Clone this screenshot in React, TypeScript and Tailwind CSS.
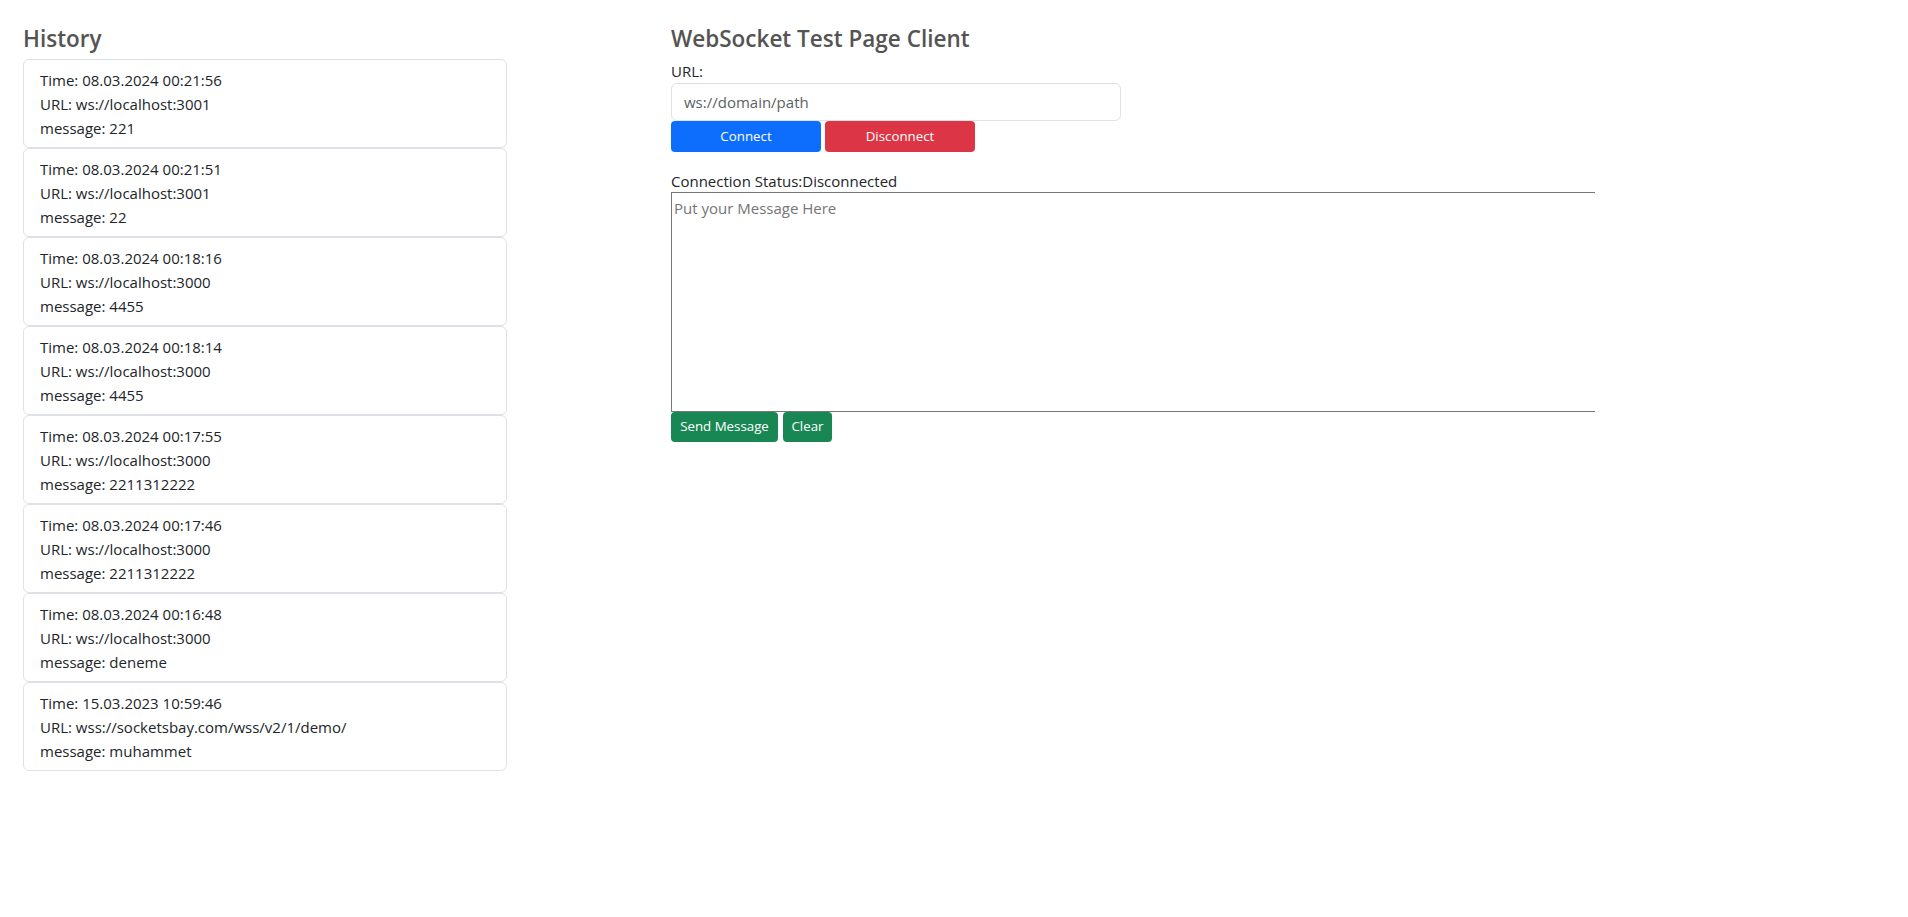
import React from 'react';

const history = [
    {time: '08.03.2024 00:21:56', url: 'ws://localhost:3001', message: '221'},
    {time: '08.03.2024 00:21:51', url: 'ws://localhost:3001', message: '22'},
    {time: '08.03.2024 00:18:16', url: 'ws://localhost:3000', message: '4455'},
    {time: '08.03.2024 00:18:14', url: 'ws://localhost:3000', message: '4455'},
    {time: '08.03.2024 00:17:55', url: 'ws://localhost:3000', message: '2211312222'},
    {time: '08.03.2024 00:17:46', url: 'ws://localhost:3000', message: '2211312222'},
    {time: '08.03.2024 00:16:48', url: 'ws://localhost:3000', message: 'deneme'},
    {time: '15.03.2023 10:59:46', url: 'wss://socketsbay.com/wss/v2/1/demo/', message: 'muhammet'},
];

const App = () => {
    return (
        <div className="min-h-screen bg-white text-[#212529] flex items-start pt-[24px] text-[15px] font-['Open_Sans',sans-serif]">
            {/* history column */}
            <section className="w-[484px] ml-[23px] flex-none">
                <h4 className="text-[22.5px] leading-[29px] font-semibold text-[#545454] mb-[6px]">History</h4>
                <div className="flex flex-col">
                    {history.map((item, i) => (
                        <div key={i} className="border border-[#dee2e6] rounded-[6px] pl-4 pr-4 pt-2 pb-[7px] leading-[24px]">
                            <div>Time: {item.time}</div>
                            <div>URL: {item.url}</div>
                            <div>message: {item.message}</div>
                        </div>
                    ))}
                </div>
            </section>

            {/* client column */}
            <section className="ml-[164px] w-[924px] flex-none overflow-hidden">
                <h4 className="text-[22.5px] leading-[29px] font-semibold text-[#545454] mb-[6px]">WebSocket Test Page Client</h4>
                <label htmlFor="url" className="block leading-[24px]">URL:</label>
                <input
                    id="url"
                    type="text"
                    placeholder="ws://domain/path"
                    className="block w-[450px] h-[38px] px-3 rounded-[6px] border border-[#dee2e6] outline-none placeholder:text-[#5c5f62] text-[15px]"/>
                <div className="flex gap-1">
                    <button className="w-[150px] h-[31px] rounded-[4px] bg-[#0d6efd] text-white text-[13.3px]">Connect</button>
                    <button className="w-[150px] h-[31px] rounded-[4px] bg-[#dc3545] text-white text-[13.3px]">Disconnect</button>
                </div>
                <div className="mt-[19px] leading-[21px]">Connection Status:Disconnected</div>
                <textarea
                    placeholder="Put your Message Here"
                    className="block w-[1000px] h-[220px] border border-r-0 border-[#767676] p-[2px] outline-none resize-none placeholder:text-[#757575] text-[15px] leading-[26px]"/>
                <div className="flex gap-[5px]">
                    <button className="w-[107px] h-[30px] rounded-[4px] bg-[#198754] text-white text-[13.3px]">Send Message</button>
                    <button className="w-[49px] h-[30px] rounded-[4px] bg-[#198754] text-white text-[13.3px]">Clear</button>
                </div>
            </section>
        </div>
    );
};

export default App;
